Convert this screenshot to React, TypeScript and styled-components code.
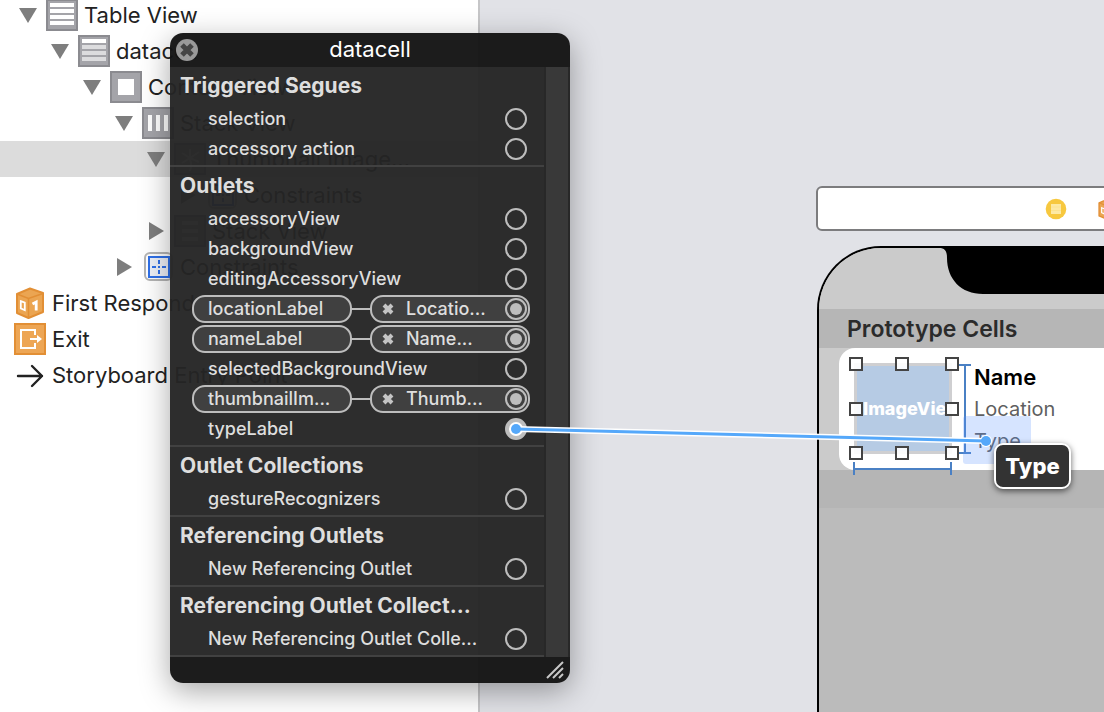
import React from "react";
import styled, { createGlobalStyle, css } from "styled-components";

const Global = createGlobalStyle`
  *, *::before, *::after { box-sizing: border-box; }
  body { margin: 0; font-family: Inter, "Liberation Sans", sans-serif; }
  button { font: inherit; color: inherit; border: 0; padding: 0; background: none; }
  h2, h3, p, ul { margin: 0; padding: 0; font-size: inherit; font-weight: inherit; }
  ul { list-style: none; }
`;

const Workspace = styled.main`
  position: relative;
  display: flex;
  min-height: 100vh;
  overflow: hidden;
  background: #e1e2e7;
`;

/* ---------- document outline ---------- */

const Outline = styled.nav`
  flex: 0 0 480px;
  background: #fff;
  border-right: 2px solid #c6c6c8;
`;

const OutlineList = styled.ul`
  margin-top: -3px;
`;

const OutlineRow = styled.li<{ $depth: number; $selected?: boolean }>`
  display: flex;
  align-items: center;
  height: 36px;
  padding-left: ${(p) => 19 + p.$depth * 32}px;
  background: ${(p) => (p.$selected ? "#dcdcdc" : "transparent")};
  color: #222;
  font-size: 22px;
  line-height: 28px;
  white-space: nowrap;
`;

const ObjectRow = styled(OutlineRow)`
  padding-left: 14px;
  gap: 6px;
`;

const Disclosure = styled.button`
  display: flex;
  justify-content: center;
  width: 18px;
  margin-right: 9px;
`;

const IconSlot = styled.span`
  display: flex;
  width: 32px;
  margin-right: 6px;
`;

type Kind = "table" | "cell" | "content" | "hstack" | "image" | "vstack" | "constraints";

const OutlineIcon = ({ kind }: { kind: Kind }) => {
  if (kind === "constraints")
    return (
      <svg width="32" height="32" viewBox="0 0 32 32" fill="none">
        <rect x="3" y="2" width="27" height="27" rx="5" fill="#fff" stroke="#b4b4b4" strokeWidth="2" />
        <rect x="7" y="6" width="20" height="20" fill="#eef1f8" stroke="#2f70e8" strokeWidth="2" />
        <path d="M17 9v4M17 19v4M10 16h4M20 16h4M16 16h2" stroke="#2f70e8" strokeWidth="2" />
      </svg>
    );
  return (
    <svg width="32" height="32" viewBox="0 0 32 32">
      <rect x="1" y="1" width="30" height="30" fill="#a4a4a9" stroke="#8b8b90" strokeWidth="2" />
      {(kind === "table" || kind === "cell") &&
        [4, 10, 16, 22].map((y, i) => (
          <rect key={y} x="4" y={y} width="24" height="4" fill={kind === "cell" && i > 0 ? "#dcdcde" : "#fff"} />
        ))}
      {kind === "content" && <rect x="8" y="8" width="16" height="16" fill="#fff" />}
      {kind === "hstack" && [6, 14, 22].map((x) => <rect key={x} x={x} y="8" width="4" height="16" fill="#fff" />)}
      {kind === "vstack" && [6, 14, 22].map((y) => <rect key={y} x="8" y={y} width="16" height="4" fill="#fff" />)}
      {kind === "image" && (
        <path d="M16 28c2-6 1-9 0-12M16 15L8 10M16 15l9-6M16 15L8 20M16 15l9 4M16 15V6" stroke="#fff" strokeWidth="2" fill="none" />
      )}
    </svg>
  );
};

const Triangle = ({ open }: { open: boolean }) =>
  open ? (
    <svg width="18" height="15" viewBox="0 0 18 15">
      <path d="M0 0h18L9 15z" fill="#7e7e7e" />
    </svg>
  ) : (
    <svg width="15" height="18" viewBox="0 0 15 18">
      <path d="M0 0v18l15-9z" fill="#7e7e7e" />
    </svg>
  );

const CubeIcon = ({ size }: { size: number }) => (
  <svg width={size} height={size} viewBox="0 0 32 32">
    <path d="M16 1.500l13 4.500v19l-14.500 6L3 26V7z" fill="#eba552" stroke="#e28f35" strokeWidth="2" strokeLinejoin="round" />
    <path d="M3 7l11.500 4.500L29 6.500" stroke="#e28f35" strokeWidth="1.600" fill="none" />
    <path d="M14.500 11.500V31" stroke="#e28f35" strokeWidth="1.600" />
    <path d="M6.800 14.200l4 1.500v7.500l-4-1.800z" fill="none" stroke="#fff" strokeWidth="1.800" />
    <path d="M18.500 17l3.700-2v8.500" fill="none" stroke="#fff" strokeWidth="2.800" />
  </svg>
);

const ExitIcon = () => (
  <svg width="32" height="32" viewBox="0 0 32 32" fill="none">
    <rect x="1" y="1" width="30" height="30" fill="#eda655" stroke="#e28f35" strokeWidth="2" />
    <path d="M21 12V7H7v18h14v-5M16 16h8" stroke="#fff" strokeWidth="2" />
    <path d="M23 12l5 4-5 4z" fill="#fff" />
  </svg>
);

const EntryArrow = () => (
  <svg width="32" height="32" viewBox="0 0 32 32" fill="none">
    <path d="M4 17h24M18 7l10 10-10 10" stroke="#222" strokeWidth="2.400" strokeLinecap="round" strokeLinejoin="round" />
  </svg>
);

const tree: { label: string; depth: number; kind: Kind; open: boolean; selected?: boolean }[] = [
  { label: "Table View", depth: 0, kind: "table", open: true },
  { label: "datacell", depth: 1, kind: "cell", open: true },
  { label: "Content View", depth: 2, kind: "content", open: true },
  { label: "Stack View", depth: 3, kind: "hstack", open: true },
  { label: "Thumbnail Image...", depth: 4, kind: "image", open: true, selected: true },
  { label: "Constraints", depth: 5, kind: "constraints", open: false },
  { label: "Stack View", depth: 4, kind: "vstack", open: false },
  { label: "Constraints", depth: 3, kind: "constraints", open: false },
];

/* ---------- canvas with the device scene ---------- */

const Canvas = styled.section`
  flex: 1;
  min-width: 0;
  display: flex;
  flex-direction: column;
  gap: 15px;
  padding: 186px 0 0 336px;
  overflow: hidden;
`;

const SceneDock = styled.div`
  display: flex;
  align-items: center;
  gap: 30px;
  height: 45px;
  margin-right: -40px;
  padding-left: 227px;
  background: #fff;
  border: 2px solid #7c7c7e;
  border-radius: 6px;
`;

const Device = styled.div`
  flex: 1;
  display: flex;
  flex-direction: column;
  margin: 0 -80px 0 1px;
  background: #bbb;
  border: 2px solid #000;
  border-bottom: 0;
  border-radius: 64px 64px 0 0;
  overflow: hidden;
`;

const StatusArea = styled.div`
  display: flex;
  height: 61px;
  padding-left: 120px;
  background: #cbcbcb;
`;

const Notch = styled.svg`
  flex: none;
`;

const PrototypeHeader = styled.h2`
  height: 39px;
  padding-left: 28px;
  background: #b6b6b6;
  color: #2b2b2b;
  font-size: 23px;
  font-weight: 600;
  line-height: 41px;
`;

const CellBand = styled.div`
  padding-left: 20px;
  background: #cbcbcb;
`;

const Cell = styled.div`
  display: flex;
  gap: 18px;
  height: 122px;
  padding: 15px 0 0 15px;
  background: #fff;
  border-radius: 16px 0 0 16px;
`;

const Thumbnail = styled.div`
  flex: none;
  width: 98px;
  height: 91px;
  padding-left: 6px;
  overflow: hidden;
  background: #b6cbe4;
  border: 3px solid #cfcfd1;
  color: #fff;
  font-size: 18px;
  font-weight: 800;
  line-height: 86px;
`;

const CellLabels = styled.div`
  display: flex;
  flex-direction: column;
  padding-left: 4px;
  color: #5f5f61;
  font-size: 20px;
  line-height: 32px;
`;

const CellName = styled.strong`
  margin-top: -2px;
  color: #000;
  font-size: 22px;
  font-weight: 600;
`;

const TableRest = styled.div`
  height: 38px;
  background: #b5b5b5;
`;

const Overlay = styled.svg`
  position: absolute;
  top: 0;
  left: 0;
  pointer-events: none;
`;

const DropHint = styled.div`
  position: absolute;
  top: 443px;
  left: 994px;
  width: 77px;
  height: 46px;
  background: #333;
  border: 2px solid #fff;
  border-radius: 9px;
  box-shadow: 0 2px 6px rgba(0, 0, 0, 0.6);
  color: #fff;
  font-size: 22px;
  font-weight: 800;
  line-height: 42px;
  text-align: center;
`;

/* ---------- connections panel ---------- */

const Panel = styled.section`
  position: absolute;
  top: 33px;
  left: 170px;
  width: 400px;
  border-radius: 13px;
  overflow: hidden;
  color: #dedede;
`;

const PanelShadow = styled.div`
  position: absolute;
  top: 33px;
  left: 170px;
  width: 400px;
  height: 650px;
  border-radius: 13px;
  box-shadow: 0 8px 30px rgba(0, 0, 0, 0.35);
`;

const PanelBar = styled.header`
  display: grid;
  grid-template-columns: 22px 1fr 22px;
  align-items: center;
  height: 34px;
  padding: 0 6px;
  background: rgba(19, 19, 19, 0.96);
  color: #fff;
  font-size: 22px;
  line-height: 32px;
  text-align: center;
`;

const PanelTitle = styled.h2`
  padding-bottom: 2px;
`;

const PanelBody = styled.div`
  display: flex;
  background: rgba(36, 36, 36, 0.96);
`;

const Sections = styled.div`
  flex: 1;
  min-width: 0;
`;

const ScrollTrack = styled.div`
  width: 26px;
  background: #393939;
  border: 2px solid #282828;
  border-width: 0 2px;
`;

const PanelFoot = styled.footer`
  display: flex;
  justify-content: flex-end;
  height: 26px;
  padding: 4px 6px 0 0;
  background: rgba(19, 19, 19, 0.96);
`;

const Section = styled.section`
  padding-bottom: 1px;
  border-bottom: 2px solid #414141;
`;

const SectionTitle = styled.h3`
  height: 37px;
  padding-left: 10px;
  font-size: 21px;
  font-weight: 700;
  line-height: 38px;
  white-space: nowrap;
`;

const ConnectionRow = styled.li`
  display: flex;
  align-items: center;
  height: 30px;
  padding: 0 14px 0 22px;
  font-size: 18px;
  font-weight: 500;
  line-height: 26px;
  white-space: nowrap;
`;

const pill = css`
  display: flex;
  align-items: center;
  width: 160px;
  height: 28px;
  background: #404040;
  border: 2px solid #bdbdbd;
  border-radius: 13px;
`;

const OutletName = styled.span<{ $connected: boolean }>`
  ${(p) =>
    p.$connected
      ? css`
          ${pill}
          padding-left: 14px;
        `
      : css`
          flex: 1;
          padding-left: 16px;
        `}
`;

const Link = styled.span`
  width: 18px;
  height: 2px;
  background: #bdbdbd;
`;

const Target = styled.span`
  ${pill}
  padding: 0 1px 0 10px;
`;

const TargetName = styled.span`
  flex: 1;
  padding-left: 12px;
`;

const RoundButton = styled.button`
  display: flex;
  flex: none;
`;

const WellButton = styled(RoundButton)`
  margin-right: 3px;
`;

const Well = ({ filled, active }: { filled?: boolean; active?: boolean }) => (
  <svg width="22" height="22" viewBox="0 0 22 22">
    <circle cx="11" cy="11" r="10" fill={active ? "#bdbdbd" : "none"} stroke="#bdbdbd" strokeWidth="2" />
    {filled && <circle cx="11" cy="11" r="6" fill="#bdbdbd" />}
  </svg>
);

const Cross = () => (
  <svg width="12" height="12" viewBox="0 0 12 12">
    <path d="M2 2l8 8M10 2l-8 8" stroke="#c4c4c4" strokeWidth="4" />
  </svg>
);

type Connection = { name: string; target?: string; active?: boolean };

const sections: { title: string; rows: Connection[] }[] = [
  { title: "Triggered Segues", rows: [{ name: "selection" }, { name: "accessory action" }] },
  {
    title: "Outlets",
    rows: [
      { name: "accessoryView" },
      { name: "backgroundView" },
      { name: "editingAccessoryView" },
      { name: "locationLabel", target: "Locatio..." },
      { name: "nameLabel", target: "Name..." },
      { name: "selectedBackgroundView" },
      { name: "thumbnailIm...", target: "Thumb..." },
      { name: "typeLabel", active: true },
    ],
  },
  { title: "Outlet Collections", rows: [{ name: "gestureRecognizers" }] },
  { title: "Referencing Outlets", rows: [{ name: "New Referencing Outlet" }] },
  { title: "Referencing Outlet Collect...", rows: [{ name: "New Referencing Outlet Colle..." }] },
];

const ConnectionItem = ({ name, target, active }: Connection) => (
  <ConnectionRow>
    <OutletName $connected={!!target}>{name}</OutletName>
    {target ? (
      <>
        <Link />
        <Target>
          <RoundButton aria-label={`Disconnect ${name}`}>
            <Cross />
          </RoundButton>
          <TargetName>{target}</TargetName>
          <RoundButton aria-label={name}>
            <Well filled />
          </RoundButton>
        </Target>
      </>
    ) : (
      <WellButton aria-label={name}>
        <Well active={active} />
      </WellButton>
    )}
  </ConnectionRow>
);

const handles = [
  [856, 364], [902, 364], [952, 364],
  [856, 409], [952, 409],
  [856, 453], [902, 453], [952, 453],
];

export default function App() {
  return (
    <Workspace>
      <Global />
      <Outline aria-label="Document outline">
        <OutlineList>
          {tree.map((n, i) => (
            <OutlineRow key={i} $depth={n.depth} $selected={n.selected}>
              <Disclosure aria-label={`Toggle ${n.label}`}>
                <Triangle open={n.open} />
              </Disclosure>
              <IconSlot>
                <OutlineIcon kind={n.kind} />
              </IconSlot>
              {n.label}
            </OutlineRow>
          ))}
          <ObjectRow $depth={0}><CubeIcon size={32} />First Responder</ObjectRow>
          <ObjectRow $depth={0}><ExitIcon />Exit</ObjectRow>
          <ObjectRow $depth={0}><EntryArrow />Storyboard Entry Point</ObjectRow>
        </OutlineList>
      </Outline>

      <Canvas aria-label="Canvas">
        <SceneDock>
          <svg width="22" height="22" viewBox="0 0 22 22">
            <circle cx="11" cy="11" r="10.300" fill="#f7c83f" />
            <rect x="6" y="6" width="10" height="10" fill="#fde9a4" />
            <path d="M6 9h10M6 12.500h10" stroke="#fce391" />
          </svg>
          <CubeIcon size={22} />
        </SceneDock>
        <Device>
          <StatusArea>
            <Notch width="260" height="46" viewBox="0 0 260 46">
              <path d="M0 0c6 0 8 3 8 10 0 21 14 36 36 36h216V0z" fill="#000" />
            </Notch>
          </StatusArea>
          <PrototypeHeader>Prototype Cells</PrototypeHeader>
          <CellBand>
            <Cell>
              <Thumbnail>ImageView</Thumbnail>
              <CellLabels>
                <CellName>Name</CellName>
                <span>Location</span>
                <span>Type</span>
              </CellLabels>
            </Cell>
          </CellBand>
          <TableRest />
        </Device>
      </Canvas>

      <Overlay width="1104" height="712" viewBox="0 0 1104 712" fill="none">
        <path d="M959 365h12M965 365v88M959 453h12M854 469h97M854 462v13M951 462v13" stroke="#4a80c4" strokeWidth="2" />
        <rect x="963" y="416" width="68" height="48" rx="3" fill="#5b93ff" fillOpacity="0.25" />
        {handles.map(([x, y]) => (
          <rect key={`${x}-${y}`} x={x - 6} y={y - 6} width="12" height="12" fill="#fff" fillOpacity="0.9" stroke="#444" strokeWidth="2" />
        ))}
      </Overlay>

      <PanelShadow />
      <Panel aria-label="Connections">
        <PanelBar>
          <RoundButton aria-label="Close">
            <svg width="22" height="22" viewBox="0 0 22 22">
              <circle cx="11" cy="11" r="11" fill="#999" />
              <path d="M6 6l10 10M16 6L6 16" stroke="#444" strokeWidth="5" />
            </svg>
          </RoundButton>
          <PanelTitle>datacell</PanelTitle>
        </PanelBar>
        <PanelBody>
          <Sections>
            {sections.map((s) => (
              <Section key={s.title}>
                <SectionTitle>{s.title}</SectionTitle>
                <ul>
                  {s.rows.map((r) => (
                    <ConnectionItem key={r.name} {...r} />
                  ))}
                </ul>
              </Section>
            ))}
          </Sections>
          <ScrollTrack />
        </PanelBody>
        <PanelFoot>
          <svg width="18" height="18" viewBox="0 0 18 18">
            <path d="M1 17L17 1M7 17L17 7M13 17l4-4" stroke="#c8c8c8" strokeWidth="2" />
          </svg>
        </PanelFoot>
      </Panel>

      <DropHint>Type</DropHint>
      <Overlay width="1104" height="712" viewBox="0 0 1104 712">
        <path d="M516 429L986 441" stroke="#fff" strokeWidth="6" />
        <circle cx="516" cy="429" r="7" fill="#fff" />
        <circle cx="986" cy="441" r="6" fill="#fff" />
        <path d="M516 429L986 441" stroke="#55a8fa" strokeWidth="3" />
        <circle cx="516" cy="429" r="5" fill="#55a8fa" />
        <circle cx="986" cy="441" r="5" fill="#55a8fa" />
      </Overlay>
    </Workspace>
  );
}
